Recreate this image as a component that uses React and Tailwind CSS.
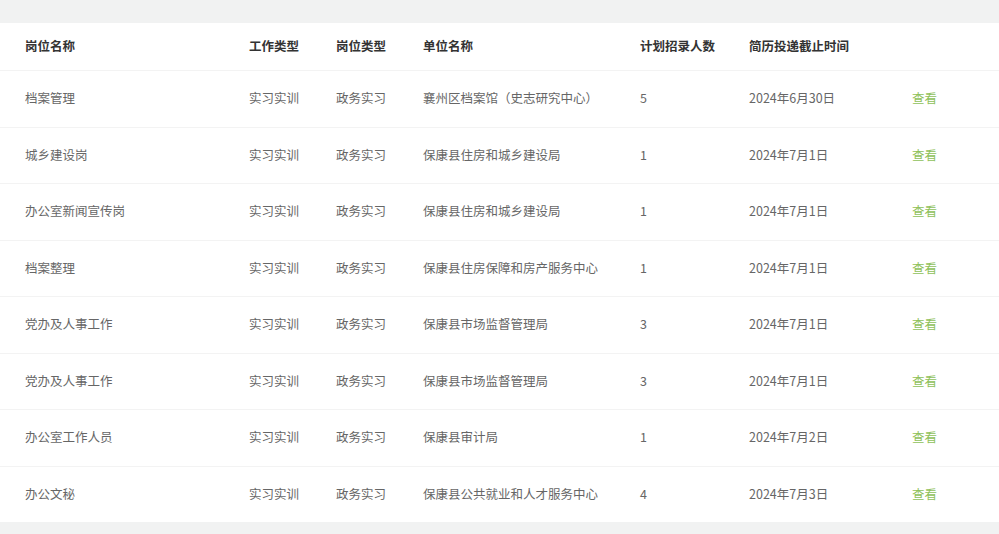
export default function App() {
  const rows = [
    ["档案管理", "实习实训", "政务实习", "襄州区档案馆（史志研究中心）", "5", "2024年6月30日"],
    ["城乡建设岗", "实习实训", "政务实习", "保康县住房和城乡建设局", "1", "2024年7月1日"],
    ["办公室新闻宣传岗", "实习实训", "政务实习", "保康县住房和城乡建设局", "1", "2024年7月1日"],
    ["档案整理", "实习实训", "政务实习", "保康县住房保障和房产服务中心", "1", "2024年7月1日"],
    ["党办及人事工作", "实习实训", "政务实习", "保康县市场监督管理局", "3", "2024年7月1日"],
    ["党办及人事工作", "实习实训", "政务实习", "保康县市场监督管理局", "3", "2024年7月1日"],
    ["办公室工作人员", "实习实训", "政务实习", "保康县审计局", "1", "2024年7月2日"],
    ["办公文秘", "实习实训", "政务实习", "保康县公共就业和人才服务中心", "4", "2024年7月3日"],
  ];
  const cols = "grid grid-cols-[224px_87px_87px_217px_109px_163px_1fr] items-center pl-[25px]";
  const headers = ["岗位名称", "工作类型", "岗位类型", "单位名称", "计划招录人数", "简历投递截止时间", ""];

  return (
    <div
      className="w-[999px] h-[534px] bg-[#f1f2f2] pt-[23px] overflow-hidden text-[12.5px]"
      style={{ fontFamily: '"Microsoft YaHei", "Noto Sans CJK SC", "Noto Sans", sans-serif' }}
    >
      <div className="bg-white">
        {/* header */}
        <div className={`${cols} h-[47px] font-bold text-[#333]`}>
          {headers.map((h, i) => (
            <div key={i}>{h}</div>
          ))}
        </div>

        {rows.map((r, idx) => (
          <div key={idx} className={`${cols} h-[56.5px] border-t border-[#f3f3f3] text-[#666]`}>
            {r.map((c, i) => (
              <div key={i}>{c}</div>
            ))}
            <div className="text-[#8fc15a]">查看</div>
          </div>
        ))}
      </div>
    </div>
  );
}
